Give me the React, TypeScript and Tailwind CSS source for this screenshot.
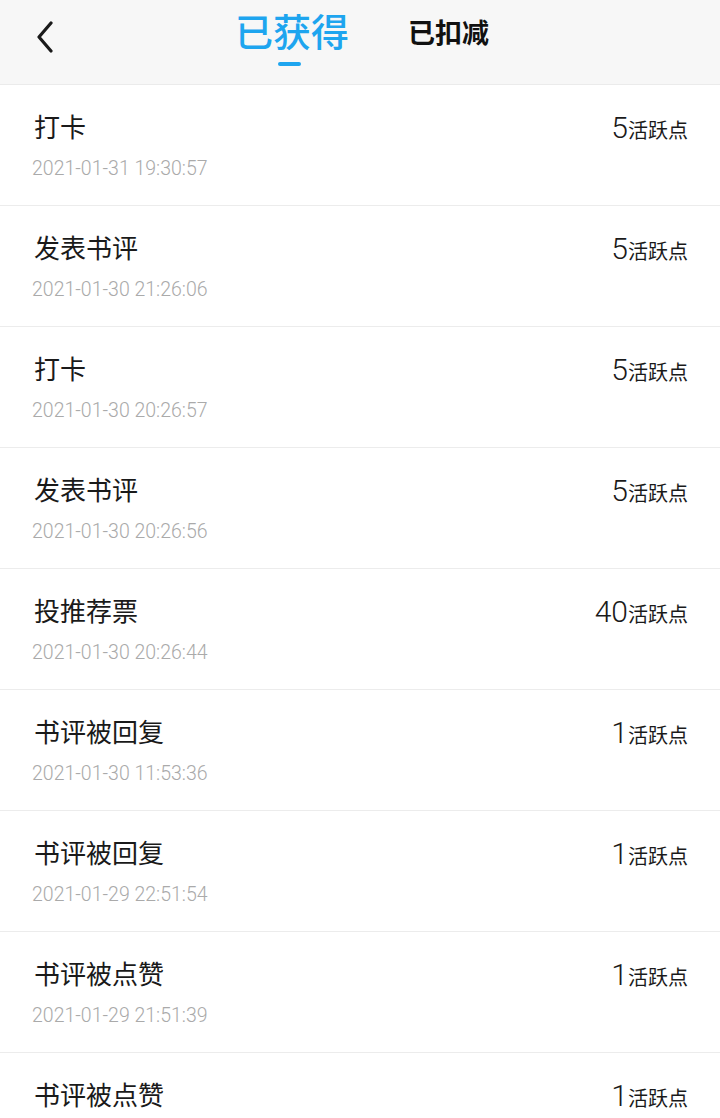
const records = [
  { title: '打卡', time: '2021-01-31 19:30:57', points: 5 },
  { title: '发表书评', time: '2021-01-30 21:26:06', points: 5 },
  { title: '打卡', time: '2021-01-30 20:26:57', points: 5 },
  { title: '发表书评', time: '2021-01-30 20:26:56', points: 5 },
  { title: '投推荐票', time: '2021-01-30 20:26:44', points: 40 },
  { title: '书评被回复', time: '2021-01-30 11:53:36', points: 1 },
  { title: '书评被回复', time: '2021-01-29 22:51:54', points: 1 },
  { title: '书评被点赞', time: '2021-01-29 21:51:39', points: 1 },
  { title: '书评被点赞', time: '2021-01-29 21:40:12', points: 1 },
]

const font = { fontFamily: 'Roboto, "Noto Sans CJK SC", sans-serif' }

export default function App() {
  return (
    <div className="w-[720px] h-[1118px] overflow-hidden bg-white" style={font}>
      <header className="h-[85px] bg-[#f7f7f7] border-b border-[#ebebeb] flex items-start">
        <button className="ml-[34px] mt-[21px] w-[22px] h-[32px] flex items-center justify-center">
          <svg width="20" height="32" viewBox="0 0 20 32" fill="none">
            <path d="M16 2 L4 16 L16 30" stroke="#1a1a1a" strokeWidth="3.2" strokeLinecap="round" strokeLinejoin="round" />
          </svg>
        </button>
        <div className="ml-[179px] flex flex-col items-center">
          <span className="mt-[9px] text-[38px] leading-[48px] font-medium text-[#1ea5ef]">已获得</span>
          <span className="mt-[5px] -ml-[5px] w-[23px] h-[4px] rounded-full bg-[#1ea5ef]" />
        </div>
        <span className="ml-[59px] mt-[16px] text-[27px] leading-[36px] font-bold text-[#111]">已扣减</span>
      </header>
      <ul>
        {records.map((r, i) => (
          <li key={i} className="h-[121px] border-b border-[#ececec] pl-[34px] pr-[32px] flex justify-between">
            <div className="flex flex-col">
              <span className="mt-[25px] text-[26px] leading-[36px] text-[#1a1a1a]">{r.title}</span>
              <span className="mt-[11px] text-[19.5px] leading-[24px] font-light text-[#aaaaaa] -ml-[2px]">{r.time}</span>
            </div>
            <div className="mt-[25px] h-[36px] flex items-baseline text-[#1a1a1a]">
              <span className="text-[30px] leading-[36px] font-light">{r.points}</span>
              <span className="text-[20px] leading-[36px]">活跃点</span>
            </div>
          </li>
        ))}
      </ul>
    </div>
  )
}
